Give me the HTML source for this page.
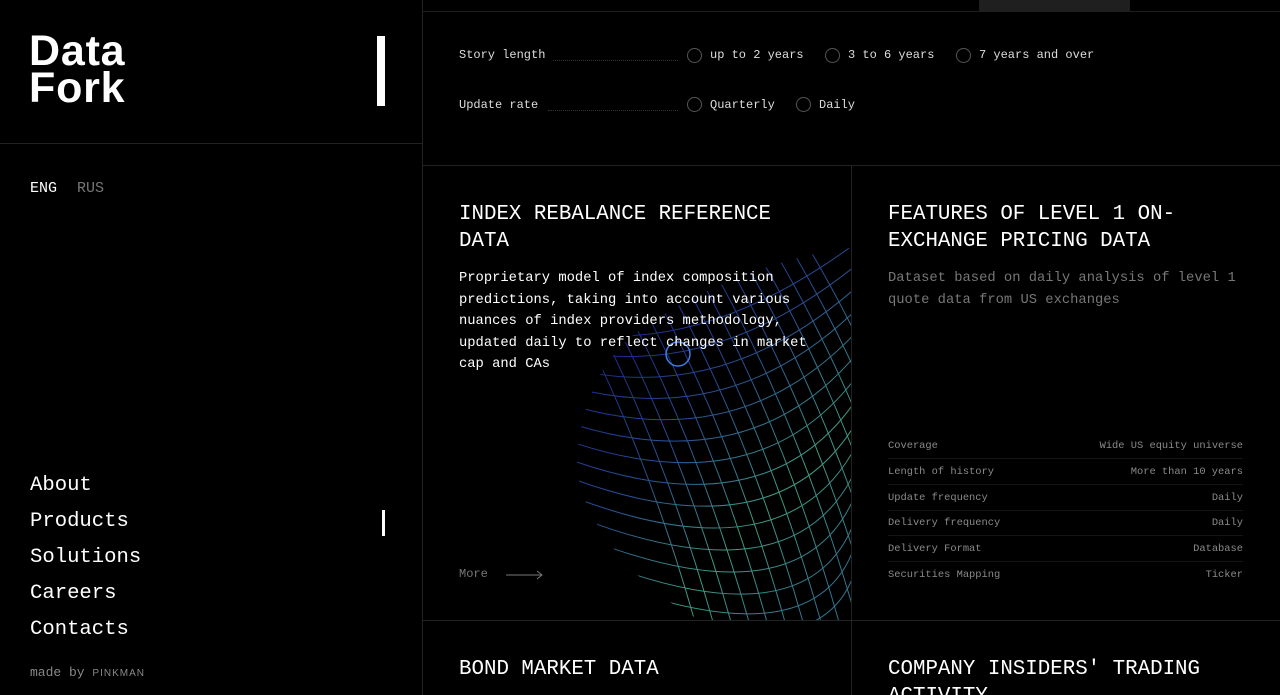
<!DOCTYPE html>
<html style="overflow:hidden;height:695px"><head><meta charset="utf-8"><style>
*{margin:0;padding:0;box-sizing:border-box}
body{width:1280px;height:695px;background:#000;color:#fff;overflow:hidden;position:relative;font-family:"Liberation Mono",monospace}
.a{position:absolute;white-space:nowrap}
.logo{font-family:"Liberation Sans",sans-serif;font-weight:bold;font-size:43px;line-height:37px;letter-spacing:0.8px;left:29px;top:33px}
.nav{left:30px;font-size:20.6px;line-height:36px}
.f{font-size:12px;color:#ddd}
.r{width:15px;height:15px;border:1px solid #555;border-radius:50%;position:absolute}
.dots{position:absolute;border-bottom:1px dotted #333;height:1px}
.t{font-size:20.8px;line-height:27px;white-space:normal;width:360px}
.d{font-size:13.8px;line-height:21.5px;white-space:normal;width:370px}
.row{position:absolute;left:888px;width:355px;height:26px;border-bottom:1px solid #141414;font-size:10.4px;color:#8a8a8a;line-height:26px;display:flex;justify-content:space-between}
</style></head><body>
<div class="a" style="left:422px;top:0;width:1px;height:695px;background:#222"></div>
<div class="a" style="left:0;top:143px;width:422px;height:1px;background:#222"></div>
<div class="a" style="left:423px;top:11px;width:857px;height:1px;background:#1e1e1e"></div>
<div class="a" style="left:979px;top:0;width:151px;height:11px;background:#1f1f1f"></div>
<div class="a" style="left:423px;top:165px;width:857px;height:1px;background:#222"></div>
<div class="a" style="left:423px;top:620px;width:857px;height:1px;background:#222"></div>
<div class="a" style="left:851px;top:165px;width:1px;height:530px;background:#222"></div>

<div class="a logo">Data<br>Fork</div>
<div class="a" style="left:377px;top:36px;width:8px;height:70px;background:#fff"></div>
<div class="a" style="left:30px;top:180px;font-size:15px">ENG<span style="color:#777;margin-left:20px">RUS</span></div>
<div class="a nav" style="top:468px">About<br>Products<br>Solutions<br>Careers<br>Contacts</div>
<div class="a" style="left:382px;top:510px;width:3px;height:26px;background:#fff"></div>
<div class="a" style="left:30px;top:665px;font-size:13px;color:#888">made by <span style="font-family:'Liberation Sans',sans-serif;font-size:10px;letter-spacing:1px">PINKMAN</span></div>

<div class="a f" style="left:459px;top:48px">Story length</div>
<div class="dots" style="left:553px;top:60px;width:125px"></div>
<div class="r" style="left:687px;top:48px"></div><div class="a f" style="left:710px;top:48px">up to 2 years</div>
<div class="r" style="left:825px;top:48px"></div><div class="a f" style="left:848px;top:48px">3 to 6 years</div>
<div class="r" style="left:956px;top:48px"></div><div class="a f" style="left:979px;top:48px">7 years and over</div>
<div class="a f" style="left:459px;top:98px">Update rate</div>
<div class="dots" style="left:548px;top:110px;width:130px"></div>
<div class="r" style="left:687px;top:97px"></div><div class="a f" style="left:710px;top:98px">Quarterly</div>
<div class="r" style="left:796px;top:97px"></div><div class="a f" style="left:819px;top:98px">Daily</div>

<svg class="a" style="left:423px;top:166px" width="428" height="454" viewBox="423 166 428 454">
<defs>
<linearGradient id="g" x1="575" y1="300" x2="851" y2="560" gradientUnits="userSpaceOnUse">
<stop offset="0" stop-color="#1e16a0"/><stop offset="0.45" stop-color="#2f5fb0"/><stop offset="0.75" stop-color="#4ab89a"/><stop offset="1" stop-color="#3a8aa8"/></linearGradient>
<clipPath id="c"><path d="M640 330 C700 285 800 252 851 248 L851 620 L700 620 C630 585 575 510 577 460 C580 400 605 355 640 330Z"/></clipPath>
</defs>
<g clip-path="url(#c)" fill="none" stroke="url(#g)" stroke-width="1" opacity="0.85">
<path d="M540 250 Q640 420 700 640"/><path d="M558 250 Q658 420 718 640"/><path d="M576 250 Q676 420 736 640"/><path d="M594 250 Q694 420 754 640"/><path d="M612 250 Q712 420 772 640"/><path d="M630 250 Q730 420 790 640"/><path d="M648 250 Q748 420 808 640"/><path d="M666 250 Q766 420 826 640"/><path d="M684 250 Q784 420 844 640"/><path d="M702 250 Q802 420 862 640"/><path d="M720 250 Q820 420 880 640"/><path d="M738 250 Q838 420 898 640"/><path d="M756 250 Q856 420 916 640"/><path d="M774 250 Q874 420 934 640"/><path d="M792 250 Q892 420 952 640"/><path d="M810 250 Q910 420 970 640"/>
<path d="M560 330 Q700 360 860 240"/><path d="M560 348 Q710 385 860 262"/><path d="M560 366 Q720 410 860 284"/><path d="M560 384 Q730 435 860 306"/><path d="M560 402 Q740 460 860 328"/><path d="M560 420 Q750 485 860 350"/><path d="M560 438 Q760 510 860 372"/><path d="M560 456 Q770 535 860 394"/><path d="M560 474 Q780 560 860 416"/><path d="M560 492 Q790 585 860 438"/><path d="M560 510 Q800 610 860 460"/><path d="M560 528 Q810 635 860 482"/><path d="M560 546 Q820 660 860 504"/><path d="M560 564 Q830 680 860 526"/><path d="M560 582 Q840 700 860 548"/>
</g>
<circle cx="678" cy="354" r="12" fill="none" stroke="#3a7fe0" stroke-width="1.5"/>
</svg>

<div class="a t" style="left:459px;top:201px">INDEX REBALANCE REFERENCE DATA</div>
<div class="a d" style="left:459px;top:268px">Proprietary model of index composition predictions, taking into account various nuances of index providers methodology, updated daily to reflect changes in market cap and CAs</div>
<div class="a" style="left:459px;top:567px;font-size:12px;color:#777">More</div>
<svg class="a" style="left:506px;top:570px" width="38" height="10"><path d="M0 5H36M31 1L36 5L31 9" stroke="#777" fill="none"/></svg>

<div class="a t" style="left:888px;top:201px">FEATURES OF LEVEL 1 ON-EXCHANGE PRICING DATA</div>
<div class="a d" style="left:888px;top:268px;color:#777">Dataset based on daily analysis of level 1 quote data from US exchanges</div>
<div class="row" style="top:433px"><span>Coverage</span><span>Wide US equity universe</span></div>
<div class="row" style="top:459px"><span>Length of history</span><span>More than 10 years</span></div>
<div class="row" style="top:485px"><span>Update frequency</span><span>Daily</span></div>
<div class="row" style="top:510px"><span>Delivery frequency</span><span>Daily</span></div>
<div class="row" style="top:536px"><span>Delivery Format</span><span>Database</span></div>
<div class="row" style="top:562px;border:none"><span>Securities Mapping</span><span>Ticker</span></div>

<div class="a t" style="left:459px;top:656px">BOND MARKET DATA</div>
<div class="a t" style="left:888px;top:656px;width:380px">COMPANY INSIDERS' TRADING ACTIVITY</div>
</body></html>
